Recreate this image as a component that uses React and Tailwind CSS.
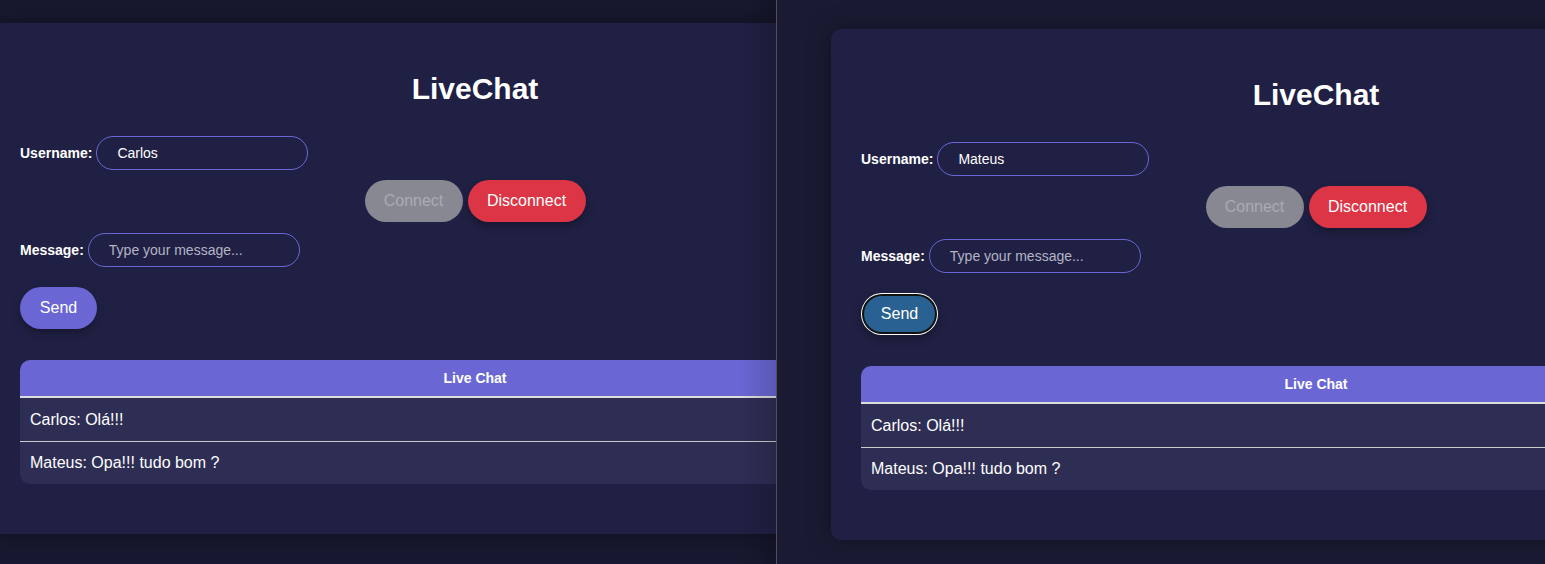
import React from 'react';

const font = { fontFamily: '"Liberation Sans", Arial, sans-serif' };

const ChatCard = ({ username, focusedSend }) => {
  const messages = ['Carlos: Olá!!!', 'Mateus: Opa!!! tudo bom ?'];

  return (
    <div className="w-[970px] shrink-0 rounded-[10px] bg-[#202044] px-[30px] pt-[48px] pb-[50px] shadow-[0_0_24px_rgba(0,0,0,0.35)] text-white">
      {/* Title */}
      <h1 className="h-[36px] text-center text-[30px] font-bold leading-[36px]">LiveChat</h1>

      {/* Username */}
      <div className="mt-[29px] flex items-center gap-1">
        <label className="text-[14px] font-bold">Username:</label>
        <input
          type="text"
          defaultValue={username}
          className="h-[34px] w-[212px] rounded-full border border-[#6a67d5] bg-transparent px-5 text-[14px] text-white outline-none"
        />
      </div>

      {/* Connect / Disconnect */}
      <div className="mt-[10px] flex justify-center gap-[5px]">
        <button className="h-[42px] w-[98px] rounded-full bg-[#888892] text-[16px] text-[#ababb4]">Connect</button>
        <button className="h-[42px] w-[118px] rounded-full bg-[#dc3545] text-[16px] text-white shadow-[0_4px_10px_rgba(0,0,0,0.3)]">
          Disconnect
        </button>
      </div>

      {/* Message */}
      <div className="mt-[11px] flex items-center gap-1">
        <label className="text-[14px] font-bold">Message:</label>
        <input
          type="text"
          placeholder="Type your message..."
          className="h-[34px] w-[212px] rounded-full border border-[#6a67d5] bg-transparent px-5 text-[14px] text-white outline-none placeholder:text-[#b4b4c4]"
        />
      </div>

      {focusedSend ? (
        <button className="mt-[20px] h-[42px] w-[77px] rounded-full bg-[#286192] text-[16px] text-white shadow-[inset_0_0_0_1px_#fff,inset_0_0_0_3px_#111,0_4px_10px_rgba(0,0,0,0.3)]">
          Send
        </button>
      ) : (
        <button className="mt-[20px] h-[42px] w-[77px] rounded-full bg-[#6a67d5] text-[16px] text-white shadow-[0_4px_10px_rgba(0,0,0,0.3)]">
          Send
        </button>
      )}

      {/* Chat table */}
      <div className="mt-[31px] overflow-hidden rounded-[10px]">
        <div className="h-[38px] border-b-2 border-[#dddddd] bg-[#6a67d5] text-center text-[14px] font-bold leading-[36px]">
          Live Chat
        </div>
        {messages.map((m, i) => (
          <div
            key={m}
            className={
              i === 0
                ? 'flex h-[44px] items-center border-b border-[#cccccc] bg-[#2e2e55] px-[10px] pt-px text-[16px]'
                : 'flex h-[42px] items-center bg-[#2e2e55] px-[10px] text-[16px]'
            }
          >
            {m}
          </div>
        ))}
      </div>
    </div>
  );
};

export default function App() {
  return (
    <div className="flex h-[564px] w-[1545px] overflow-hidden" style={font}>
      {/* Left window */}
      <div className="relative h-full w-[776px] shrink-0 overflow-hidden bg-[#181830]">
        <div className="ml-[-10px] mt-[23px] flex">
          <ChatCard username="Carlos" />
        </div>
        <div className="pointer-events-none absolute right-0 top-0 h-full w-[36px] bg-gradient-to-r from-transparent to-black/15" />
      </div>

      {/* Divider */}
      <div className="h-full w-px shrink-0 bg-[#4e4e5a]" />

      {/* Right window */}
      <div className="h-full flex-1 overflow-hidden bg-[#1a1a33]">
        <div className="ml-[54px] mt-[29px] flex">
          <ChatCard username="Mateus" focusedSend />
        </div>
      </div>
    </div>
  );
}
